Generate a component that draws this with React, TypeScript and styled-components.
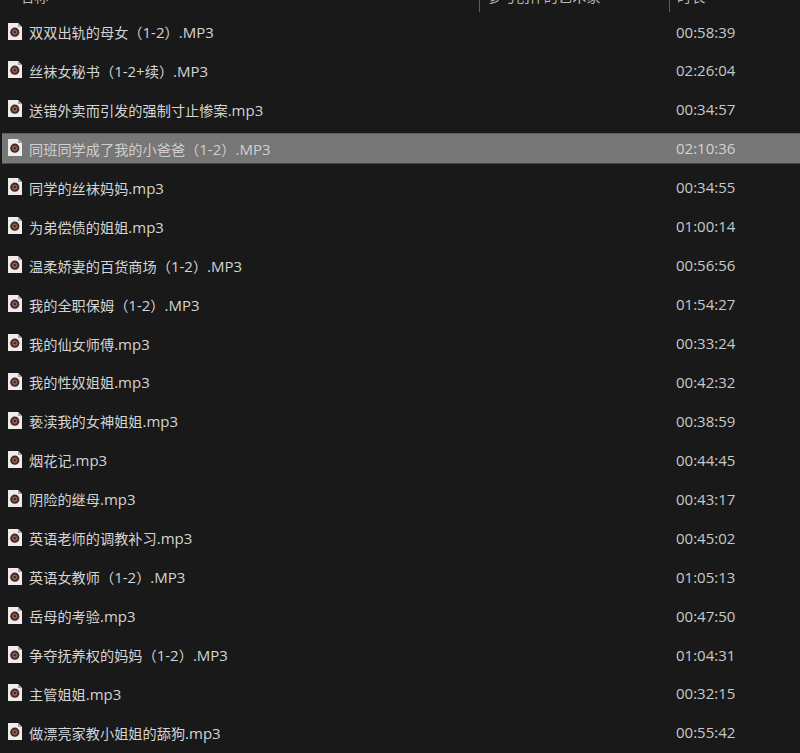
import React from 'react';
import styled, { createGlobalStyle } from 'styled-components';

type Track = { name: string; time: string; active?: boolean };

const tracks: Track[] = [
  { name: '双双出轨的母女（1-2）.MP3', time: '00:58:39' },
  { name: '丝袜女秘书（1-2+续）.MP3', time: '02:26:04' },
  { name: '送错外卖而引发的强制寸止惨案.mp3', time: '00:34:57' },
  { name: '同班同学成了我的小爸爸（1-2）.MP3', time: '02:10:36', active: true },
  { name: '同学的丝袜妈妈.mp3', time: '00:34:55' },
  { name: '为弟偿债的姐姐.mp3', time: '01:00:14' },
  { name: '温柔娇妻的百货商场（1-2）.MP3', time: '00:56:56' },
  { name: '我的全职保姆（1-2）.MP3', time: '01:54:27' },
  { name: '我的仙女师傅.mp3', time: '00:33:24' },
  { name: '我的性奴姐姐.mp3', time: '00:42:32' },
  { name: '亵渎我的女神姐姐.mp3', time: '00:38:59' },
  { name: '烟花记.mp3', time: '00:44:45' },
  { name: '阴险的继母.mp3', time: '00:43:17' },
  { name: '英语老师的调教补习.mp3', time: '00:45:02' },
  { name: '英语女教师（1-2）.MP3', time: '01:05:13' },
  { name: '岳母的考验.mp3', time: '00:47:50' },
  { name: '争夺抚养权的妈妈（1-2）.MP3', time: '01:04:31' },
  { name: '主管姐姐.mp3', time: '00:32:15' },
  { name: '做漂亮家教小姐姐的舔狗.mp3', time: '00:55:42' },
];

const GlobalStyle = createGlobalStyle`
  html, body {
    margin: 0;
    background: #191919;
  }
`;

const Page = styled.div`
  width: 800px;
  height: 753px;
  overflow: hidden;
  background: #191919;
  color: #d4d4d4;
  font-family: 'Open Sans', 'Noto Sans CJK SC', sans-serif;
  font-size: 14.2px;
`;

const Header = styled.div`
  display: grid;
  grid-template-columns: 479px 190px 1fr;
  height: 12px;
  margin-bottom: 4px;
  overflow: hidden;
`;

const HeaderCell = styled.div<{ $first?: boolean }>`
  height: 12px;
  padding-left: ${({ $first }) => ($first ? '20px' : '7px')};
  border-left: ${({ $first }) => ($first ? 'none' : '1px solid #5c5c5c')};
  color: #b8b8b8;
  white-space: nowrap;
  overflow: hidden;
`;

const HeaderLabel = styled.span`
  display: block;
  margin-top: -7px;
  line-height: 8px;
`;

const List = styled.div`
  display: flex;
  flex-direction: column;
  gap: 7.95px;
`;

const Row = styled.div<{ $active?: boolean }>`
  display: grid;
  grid-template-columns: 676px 1fr;
  align-items: center;
  box-sizing: border-box;
  height: 31px;
  margin-left: ${({ $active }) => ($active ? '2px' : '0')};
  background: ${({ $active }) => ($active ? '#777777' : 'transparent')};
  border-top: 1px solid ${({ $active }) => ($active ? '#5e5e5e' : 'transparent')};
  border-bottom: 1px solid ${({ $active }) => ($active ? '#4a4a4a' : 'transparent')};
`;

const NameCell = styled.div<{ $active?: boolean }>`
  display: flex;
  align-items: center;
  gap: 7px;
  padding-left: ${({ $active }) => ($active ? '6px' : '8px')};
  color: ${({ $active }) => ($active ? '#cfcfcf' : '#d4d4d4')};
  white-space: nowrap;
`;

const Label = styled.span`
  display: block;
  margin-top: 1px;
`;

const Latin = styled.span`
  font-size: 15px;
`;

const TimeCell = styled.div<{ $active?: boolean }>`
  margin-left: ${({ $active }) => ($active ? '-2px' : '0')};
  font-size: 15px;
  color: ${({ $active }) => ($active ? '#d2d2d2' : '#c8c8c8')};
`;

const IconSvg = styled.svg`
  flex: none;
  display: block;
  margin-top: -1px;
`;

const FileIcon = () => (
  <IconSvg width="14" height="17" viewBox="0 0 14 17">
    <path d="M0 0h10l4 4v13H0z" fill="#f1ebee" />
    <path d="M10 0l4 4h-4z" fill="#a9a4a6" />
    <circle cx="6.8" cy="9.2" r="4.6" fill="#3a2d33" />
    <circle cx="6.8" cy="9.2" r="2.6" fill="#9c5c3c" />
    <circle cx="6.8" cy="9.2" r="1.1" fill="#2a2226" />
  </IconSvg>
);

// latin runs are a bit bigger than the CJK ones in the original
const renderName = (name: string) =>
  name
    .split(/([\x20-\x7e]+)/)
    .filter(Boolean)
    .map((part, i) =>
      /^[\x20-\x7e]/.test(part) ? <Latin key={i}>{part}</Latin> : part
    );

export default function App() {
  return (
    <Page>
      <GlobalStyle />
      <Header>
        <HeaderCell $first>
          <HeaderLabel>名称</HeaderLabel>
        </HeaderCell>
        <HeaderCell>
          <HeaderLabel>参与创作的艺术家</HeaderLabel>
        </HeaderCell>
        <HeaderCell>
          <HeaderLabel>时长</HeaderLabel>
        </HeaderCell>
      </Header>
      <List>
        {tracks.map((t) => (
          <Row key={t.name} $active={t.active}>
            <NameCell $active={t.active}>
              <FileIcon />
              <Label>{renderName(t.name)}</Label>
            </NameCell>
            <TimeCell $active={t.active}>{t.time}</TimeCell>
          </Row>
        ))}
      </List>
    </Page>
  );
}
